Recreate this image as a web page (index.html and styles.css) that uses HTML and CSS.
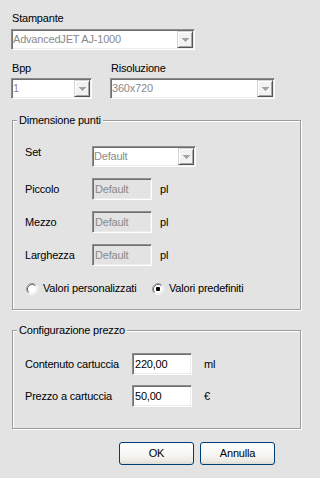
FILE: index.html
```html
<!DOCTYPE html>
<html>
<head>
<meta charset="utf-8">
<link rel="stylesheet" href="styles.css">
</head>
<body>
<div class="window">
  <div class="top">
    <div class="label">Stampante</div>
    <div class="combo combo-printer">
      <span class="combo-text">AdvancedJET AJ-1000</span>
      <span class="combo-btn"><svg width="7" height="4" viewBox="0 0 7 4"><path d="M0 0H7V1H6V2H5V3H4V4H3V3H2V2H1V1H0Z" fill="#a3a3a3"/></svg></span>
    </div>
    <div class="pair">
      <div class="field">
        <div class="label">Bpp</div>
        <div class="combo combo-bpp">
          <span class="combo-text">1</span>
          <span class="combo-btn"><svg width="7" height="4" viewBox="0 0 7 4"><path d="M0 0H7V1H6V2H5V3H4V4H3V3H2V2H1V1H0Z" fill="#a3a3a3"/></svg></span>
        </div>
      </div>
      <div class="field">
        <div class="label">Risoluzione</div>
        <div class="combo combo-res">
          <span class="combo-text">360x720</span>
          <span class="combo-btn"><svg width="7" height="4" viewBox="0 0 7 4"><path d="M0 0H7V1H6V2H5V3H4V4H3V3H2V2H1V1H0Z" fill="#a3a3a3"/></svg></span>
        </div>
      </div>
    </div>
  </div>

  <div class="group group-dots">
    <span class="legend">Dimensione punti</span>
    <div class="rows rows-dots">
      <div class="row row-set">
        <span class="row-label label-top">Set</span>
        <div class="combo combo-set">
          <span class="combo-text">Default</span>
          <span class="combo-btn"><svg width="7" height="4" viewBox="0 0 7 4"><path d="M0 0H7V1H6V2H5V3H4V4H3V3H2V2H1V1H0Z" fill="#a3a3a3"/></svg></span>
        </div>
      </div>
      <div class="row">
        <span class="row-label">Piccolo</span>
        <span class="tb tb-disabled">Default</span>
        <span class="unit">pl</span>
      </div>
      <div class="row">
        <span class="row-label">Mezzo</span>
        <span class="tb tb-disabled">Default</span>
        <span class="unit">pl</span>
      </div>
      <div class="row">
        <span class="row-label">Larghezza</span>
        <span class="tb tb-disabled">Default</span>
        <span class="unit">pl</span>
      </div>
    </div>
    <div class="radios">
      <span class="radio radio-first">
        <svg width="12" height="12" viewBox="0 0 12 12">
          <circle cx="6" cy="6" r="4.5" fill="#fff"/>
          <path d="M2.11 9.89A5.5 5.5 0 0 1 9.89 2.11" fill="none" stroke="#9a9a9a"/>
          <path d="M9.89 2.11A5.5 5.5 0 0 1 2.11 9.89" fill="none" stroke="#ffffff"/>
          <path d="M2.82 9.18A4.5 4.5 0 0 1 9.18 2.82" fill="none" stroke="#6a6a6a"/>
          <path d="M9.18 2.82A4.5 4.5 0 0 1 2.82 9.18" fill="none" stroke="#e8e8e8"/>
        </svg>
        <span>Valori personalizzati</span>
      </span>
      <span class="radio">
        <svg width="12" height="12" viewBox="0 0 12 12">
          <circle cx="6" cy="6" r="4.5" fill="#fff"/>
          <path d="M2.11 9.89A5.5 5.5 0 0 1 9.89 2.11" fill="none" stroke="#9a9a9a"/>
          <path d="M9.89 2.11A5.5 5.5 0 0 1 2.11 9.89" fill="none" stroke="#ffffff"/>
          <path d="M2.82 9.18A4.5 4.5 0 0 1 9.18 2.82" fill="none" stroke="#6a6a6a"/>
          <path d="M9.18 2.82A4.5 4.5 0 0 1 2.82 9.18" fill="none" stroke="#e8e8e8"/>
          <rect x="4" y="4" width="4" height="4" rx="1" fill="#000"/>
        </svg>
        <span>Valori predefiniti</span>
      </span>
    </div>
  </div>

  <div class="group group-price">
    <span class="legend">Configurazione prezzo</span>
    <div class="rows rows-price">
      <div class="row">
        <span class="row-label">Contenuto cartuccia</span>
        <span class="tb">220,00</span>
        <span class="unit">ml</span>
      </div>
      <div class="row">
        <span class="row-label">Prezzo a cartuccia</span>
        <span class="tb">50,00</span>
        <span class="unit">€</span>
      </div>
    </div>
  </div>

  <div class="buttons">
    <button class="btn">OK</button>
    <button class="btn">Annulla</button>
  </div>
</div>
</body>
</html>
```

FILE: styles.css
```css
* {
  box-sizing: border-box;
}

html,
body {
  margin: 0;
  background: #e3e3e3;
}

body {
  font-family: "Liberation Sans", Arial, sans-serif;
  font-size: 11px;
  line-height: 13px;
  letter-spacing: -0.2px;
  color: #000;
}

.window {
  width: 311px;
  height: 478px;
  padding-top: 12px;
  overflow: hidden;
  display: flex;
  flex-direction: column;
}

.top {
  padding-left: 11px;
}

.label {
  height: 13px;
  padding-left: 1px;
  white-space: nowrap;
}

/* Combobox */
.combo {
  display: flex;
  height: 21px;
  padding: 1px;
  background: #fff;
  border: 1px solid;
  border-color: #8e8e8e #ffffff #ffffff #8e8e8e;
  box-shadow: inset 1px 1px #6e6e6e, inset -1px -1px #ececec;
}

.combo-text {
  flex: 1;
  color: #8a8a8a;
  line-height: 17px;
  white-space: nowrap;
  overflow: hidden;
}

.combo-btn {
  width: 16px;
  height: 17px;
  display: flex;
  align-items: center;
  justify-content: center;
  background: #f2f2f2;
  border: 1px solid;
  border-color: #d6d6d6 #555555 #555555 #d6d6d6;
  box-shadow: inset 1px 1px #ffffff, inset -1px -1px #a6a6a6;
}

.combo-printer {
  width: 184px;
  margin-top: 4px;
}

.pair {
  display: flex;
  gap: 18px;
  margin-top: 12px;
}

.pair .combo {
  margin-top: 3px;
}

.combo-bpp {
  width: 81px;
}

.combo-res {
  width: 165px;
}

/* Group boxes */
.group {
  position: relative;
  width: 289px;
  margin-left: 12px;
  border: 1px solid #9c9c9c;
  box-shadow: inset 1px 1px #ffffff, 1px 1px #ffffff;
  padding-left: 12px;
}

.legend {
  position: absolute;
  top: -7px;
  left: 4px;
  padding: 0 2px;
  background: #e3e3e3;
  line-height: 13px;
  white-space: nowrap;
}

.group-dots {
  margin-top: 21px;
  padding-top: 25px;
  padding-bottom: 14px;
}

.group-price {
  margin-top: 20px;
  padding-top: 22px;
  padding-bottom: 21px;
}

.rows {
  display: flex;
  flex-direction: column;
}

.rows-dots {
  gap: 11px;
}

.rows-price {
  gap: 10px;
}

.row {
  display: flex;
  align-items: center;
  height: 22px;
}

.row-set {
  height: 21px;
  align-items: flex-start;
}

.row-label {
  white-space: nowrap;
}

.rows-dots .row-label {
  width: 67px;
}

.rows-price .row-label {
  width: 107px;
}

.label-top {
  line-height: 13px;
}

.combo-set {
  width: 104px;
}

/* Text boxes */
.tb {
  width: 60px;
  height: 22px;
  padding-left: 2px;
  line-height: 20px;
  background: #fff;
  border: 1px solid;
  border-color: #8e8e8e #ffffff #ffffff #8e8e8e;
  box-shadow: inset 1px 1px #6e6e6e, inset -1px -1px #ececec;
  white-space: nowrap;
}

.tb-disabled {
  background: #e3e3e3;
  color: #8a8a8a;
}

.rows-dots .unit {
  margin-left: 8px;
}

.rows-price .unit {
  margin-left: 12px;
}

/* Radios */
.radios {
  display: grid;
  grid-template-columns: 126px auto;
  margin-top: 16px;
  padding-left: 1px;
  height: 13px;
}

.radio {
  display: flex;
  align-items: center;
  gap: 5px;
  white-space: nowrap;
}

.radio svg {
  display: block;
  flex: none;
}

/* Buttons */
.buttons {
  display: flex;
  justify-content: flex-end;
  gap: 6px;
  padding-right: 36px;
  margin-top: 13px;
}

.btn {
  width: 75px;
  height: 23px;
  padding: 0;
  font-family: "Liberation Sans", Arial, sans-serif;
  font-size: 11px;
  line-height: 21px;
  letter-spacing: -0.2px;
  color: #000;
  border: 1px solid #003c74;
  border-radius: 3px;
  background: linear-gradient(180deg, #ffffff 0%, #f6f6f3 55%, #ebeae5 85%, #dcdad3 100%);
}
```
